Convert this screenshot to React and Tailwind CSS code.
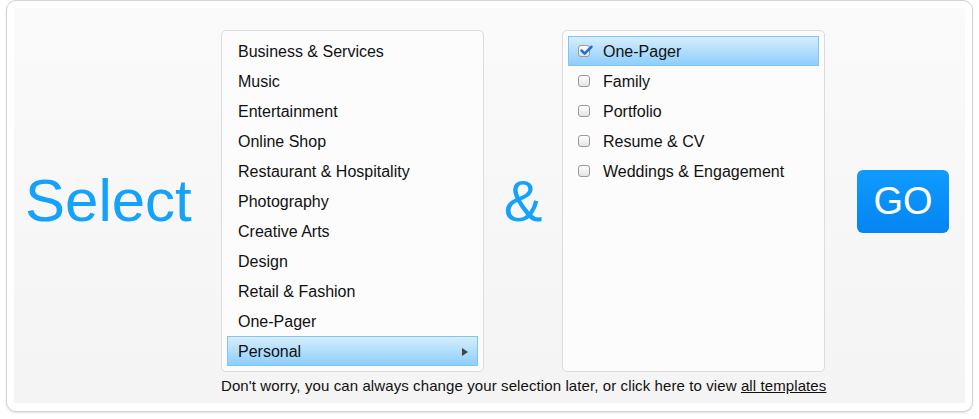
import { Check } from "lucide-react";

const categories = [
  "Business & Services",
  "Music",
  "Entertainment",
  "Online Shop",
  "Restaurant & Hospitality",
  "Photography",
  "Creative Arts",
  "Design",
  "Retail & Fashion",
  "One-Pager",
  "Personal",
];

const subcategories = [
  { label: "One-Pager", checked: true },
  { label: "Family" },
  { label: "Portfolio" },
  { label: "Resume & CV" },
  { label: "Weddings & Engagement" },
];

export default function App() {
  return (
    <div className="w-[979px] h-[419px] bg-white font-['Liberation_Sans',Arial,sans-serif] text-[#111]">
      {/* card */}
      <div className="ml-[6px] w-[967px] h-[412px] rounded-[10px] border border-[#d4d4d4] bg-white p-[7px] shadow-[0_1px_2px_rgba(0,0,0,0.12)]">
        <div className="h-[395px] bg-gradient-to-b from-[#fafafa] to-[#f4f4f4] pt-[22px]">
          <div className="flex items-center">
            <div className="w-[207px] pl-[11px] text-[60px] leading-none text-[#14a2fb]">Select</div>

            {/* categories */}
            <div className="w-[263px] h-[342px] rounded-[5px] border border-[#dcdcdc] bg-[#fcfcfc] px-[5px] pt-[5px]">
              {categories.map((c) => (
                <CategoryRow key={c} label={c} active={c === "Personal"} />
              ))}
            </div>

            <div className="w-[78px] text-center text-[58px] leading-none text-[#14a2fb]">&amp;</div>

            {/* sub categories */}
            <div className="w-[263px] h-[342px] rounded-[5px] border border-[#dcdcdc] bg-[#fcfcfc] px-[5px] pt-[5px]">
              {subcategories.map((s) => (
                <CheckRow key={s.label} label={s.label} checked={s.checked} />
              ))}
            </div>

            <button className="ml-[32px] w-[92px] h-[63px] rounded-[6px] bg-gradient-to-b from-[#0f9bff] to-[#0585f2] text-[38px] leading-none text-white">
              GO
            </button>
          </div>

          <p className="ml-[207px] w-[604px] mt-[3px] text-center text-[15px] tracking-[0.1px] text-[#111] whitespace-nowrap">
            Don't worry, you can always change your selection later, or click here to view{" "}
            <a className="underline">all templates</a>
          </p>
        </div>
      </div>
    </div>
  );
}

function CategoryRow({ label, active }) {
  return (
    <div
      className={`flex h-[30px] items-center justify-between border pl-[10px] pr-[9px] pt-[2px] text-[16px] ${
        active
          ? "border-[#7fc6f7] bg-gradient-to-b from-[#d6eefd] to-[#8ccefb]"
          : "border-transparent"
      }`}
    >
      <span>{label}</span>
      {active && (
        <span className="h-0 w-0 border-y-[4px] border-l-[6px] border-y-transparent border-l-[#444]"></span>
      )}
    </div>
  );
}

function CheckRow({ label, checked }) {
  return (
    <div
      className={`flex h-[30px] items-center gap-[13px] border pl-[9px] text-[16px] ${
        checked
          ? "border-[#7fc6f7] bg-gradient-to-b from-[#d6eefd] to-[#8ccefb]"
          : "border-transparent"
      }`}
    >
      <span className="relative flex h-[12px] w-[12px] items-center justify-center rounded-[3px] border border-[#9a9a9a] bg-gradient-to-b from-white to-[#e4e4e4]">
        {checked && (
          <Check size={15} strokeWidth={4} className="absolute -top-[3px] left-[0px] text-[#1a6fd8]" />
        )}
      </span>
      <span className="pt-[2px]">{label}</span>
    </div>
  );
}
